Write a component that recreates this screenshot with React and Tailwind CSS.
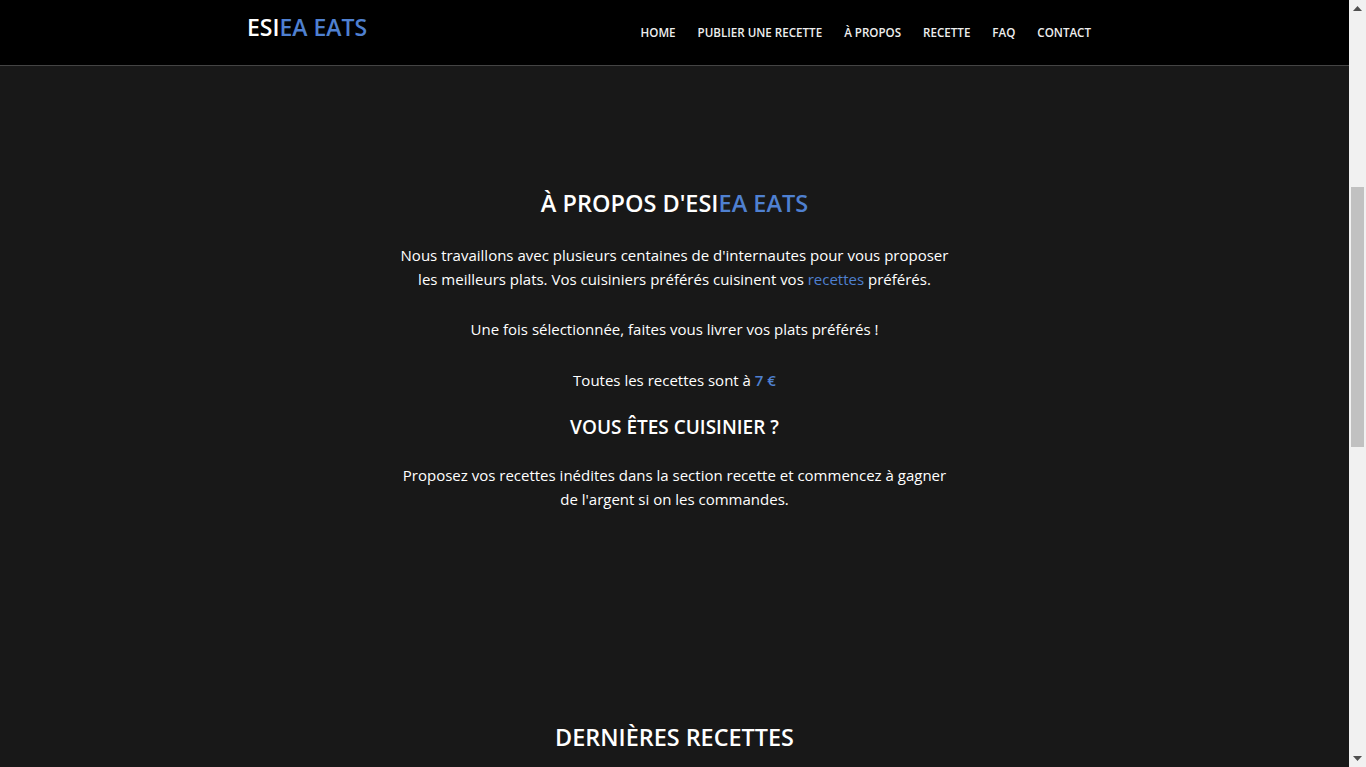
import React from 'react';

const links = ['Home', 'Publier une recette', 'À propos', 'Recette', 'FAQ', 'Contact'];

const Header = () => (
    <header className="h-[66px] bg-black border-b border-[#444]">
        <div className="w-[855px] mx-auto flex justify-between items-start">
            <a className="pt-[11px] text-[23px] leading-[33px] font-semibold text-white">
                ESI<span className="text-[#4f80d0]">EA EATS</span>
            </a>
            <nav className="flex pt-[25px]">
                {links.map((l) => (
                    <a key={l} className="px-[11px] text-[11.6px] leading-[16px] font-semibold uppercase text-[#eee]">
                        {l}
                    </a>
                ))}
            </nav>
        </div>
    </header>
);

// fake browser scrollbar on the right edge
const Scrollbar = () => (
    <div className="w-[17px] h-full bg-[#f1f1f1] flex flex-col items-center">
        <div className="h-[17px] flex items-center justify-center">
            <svg width="9" height="5" viewBox="0 0 9 5"><path d="M0 5 L4.5 0 L9 5 Z" fill="#505050" /></svg>
        </div>
        <div className="flex-1 w-full px-[2px] pt-[170px]">
            <div className="h-[260px] bg-[#c1c1c1]" />
        </div>
        <div className="h-[17px] flex items-center justify-center">
            <svg width="9" height="5" viewBox="0 0 9 5"><path d="M0 0 L9 0 L4.5 5 Z" fill="#505050" /></svg>
        </div>
    </div>
);

export default function App() {
    return (
        <div className="h-screen flex overflow-hidden bg-[#181818] text-white" style={{ fontFamily: '"Open Sans", sans-serif' }}>
            <div className="flex-1 min-w-0">
                <Header />

                {/* About */}
                <section className="pt-[122px] text-center">
                    <h2 className="text-[23.5px] leading-[31px] font-semibold">
                        À PROPOS D'ESI<span className="text-[#4f80d0]">EA EATS</span>
                    </h2>
                    <p className="mt-6 text-[15px] leading-[24px]">
                        Nous travaillons avec plusieurs centaines de d'internautes pour vous proposer<br />
                        les meilleurs plats. Vos cuisiniers préférés cuisinent vos <a className="text-[#4f80d0]">recettes</a> préférés.
                    </p>
                    <p className="mt-[26px] text-[15px] leading-[24px]">
                        Une fois sélectionnée, faites vous livrer vos plats préférés !
                    </p>
                    <p className="mt-[27px] text-[15px] leading-[24px]">
                        Toutes les recettes sont à <b className="font-semibold text-[#4f80d0]">7 €</b>
                    </p>
                    <h3 className="mt-6 text-[19px] leading-[22px] font-semibold">VOUS ÊTES CUISINIER ?</h3>
                    <p className="mt-[25px] text-[15px] leading-[24px]">
                        Proposez vos recettes inédites dans la section recette et commencez à gagner<br />
                        de l'argent si on les commandes.
                    </p>
                </section>

                {/* Latest recipes */}
                <section className="pt-[213px] text-center">
                    <h2 className="text-[23.4px] leading-[26px] font-semibold">DERNIÈRES RECETTES</h2>
                </section>
            </div>
            <Scrollbar />
        </div>
    );
}
